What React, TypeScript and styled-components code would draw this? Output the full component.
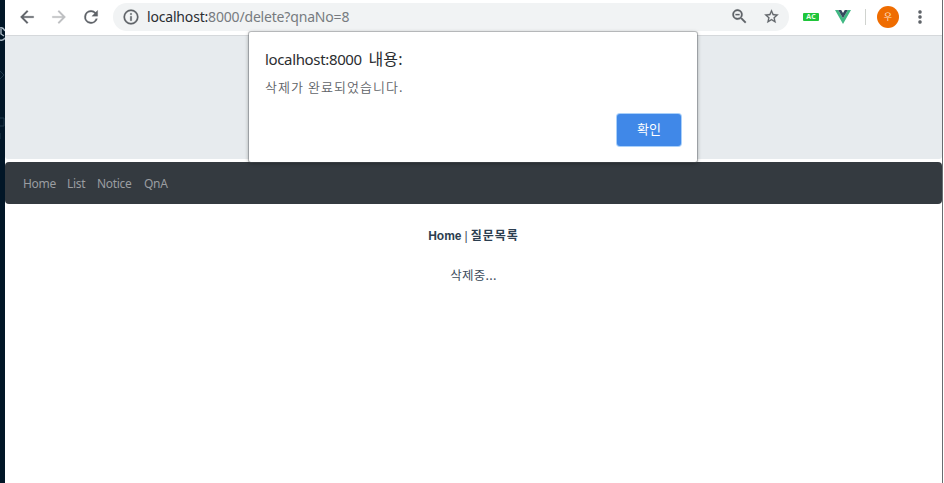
import React from 'react';
import styled, { createGlobalStyle } from 'styled-components';

const GlobalStyle = createGlobalStyle`
  * { box-sizing: border-box; }
  body { margin: 0; overflow: hidden; background: #fff; }
`;

const Desktop = styled.div`
  display: flex;
  position: relative;
  width: 944px;
  height: 483px;
  background: #fff;
  font-family: "Noto Sans", "Noto Sans CJK KR", sans-serif;
`;

const EditorEdge = styled.div`
  width: 5px;
  flex: none;
  background: #011627;
  svg { display: block; }
`;

const BrowserWindow = styled.div`
  display: flex;
  flex-direction: column;
  flex: 1;
  min-width: 0;
  border-right: 1px solid #686c70;
  margin-right: 1px;
`;

const Toolbar = styled.header`
  display: flex;
  align-items: center;
  height: 36px;
  flex: none;
  padding: 0 0 2px 12px;
  border-bottom: 1px solid #d5d8db;
`;

const ToolButton = styled.button<{ $gap?: number; $color?: string }>`
  display: flex;
  padding: 0;
  border: 0;
  background: none;
  flex: none;
  margin-right: ${p => p.$gap ?? 0}px;
  color: ${p => p.$color ?? '#5f6368'};
`;

const AddressBar = styled.div`
  display: flex;
  align-items: center;
  width: 676px;
  height: 28px;
  border-radius: 14px;
  padding: 0 9px;
  background: #f1f3f4;
`;

const Url = styled.div`
  flex: 1;
  margin-left: 7px;
  font-size: 14px;
  line-height: 20px;
  letter-spacing: -0.18px;
  color: #777b80;
  white-space: nowrap;
`;

const Host = styled.span`
  color: #2a2d31;
`;

const Extension = styled.div<{ $gap: number }>`
  display: flex;
  flex: none;
  margin-left: ${p => p.$gap}px;
`;

const AcBadge = styled.span`
  width: 16px;
  height: 8px;
  border-radius: 1px;
  background: #1fc53a;
  color: #e9ffe9;
  font: bold 7px/8px "Open Sans", sans-serif;
  text-align: center;
`;

const Divider = styled.span`
  width: 1px;
  height: 16px;
  margin: 0 11px 0 14px;
  background: #d0d3cf;
`;

const Avatar = styled.span`
  width: 22px;
  height: 22px;
  border-radius: 50%;
  margin-right: 11px;
  background: #ef6c00;
  color: #ffe0c4;
  font: 9px/21px "Noto Sans CJK KR", sans-serif;
  text-align: center;
`;

const Banner = styled.div`
  height: 123px;
  flex: none;
  margin-bottom: 3px;
  background: #e7ebee;
  border-radius: 0 0 3px 3px;
`;

const Navbar = styled.nav`
  display: flex;
  gap: 12px;
  height: 42px;
  flex: none;
  padding: 0 18px;
  border-radius: 4px;
  background: #343a40;
`;

const NavLink = styled.a<{ $width: number }>`
  width: ${p => p.$width}px;
  font-size: 12px;
  line-height: 43px;
  letter-spacing: -0.3px;
  white-space: nowrap;
  color: #9a9da0;
`;

const Main = styled.main`
  display: flex;
  flex-direction: column;
  align-items: center;
  padding-top: 22px;
  color: #3d4d5d;
  font-size: 12px;
  line-height: 20px;
`;

const Links = styled.div`
  display: flex;
  gap: 3px;
  margin-bottom: 19px;
  font-family: "Liberation Sans", "Noto Sans CJK KR", sans-serif;
`;

const PageLink = styled.a<{ $spacing?: number }>`
  font-weight: bold;
  letter-spacing: ${p => p.$spacing ?? 0}px;
  color: #2c3e50;
`;

const Status = styled.div`
  font-family: "Noto Sans CJK KR", sans-serif;
  font-size: 12.5px;
  letter-spacing: 0.3px;
`;

const Dialog = styled.section`
  position: absolute;
  left: 249px;
  top: 32px;
  width: 448px;
  height: 130px;
  display: flex;
  flex-direction: column;
  padding: 15px 16px 16px;
  background: #fff;
  border-radius: 2px;
  box-shadow: 0 0 0 1px rgba(90, 95, 100, 0.35), 0 1px 4px rgba(0, 0, 0, 0.4);
`;

const DialogTitle = styled.h1`
  margin: 0;
  font-size: 15px;
  font-weight: 400;
  line-height: 24px;
  letter-spacing: -0.35px;
  color: #2b2d30;
`;

const TitleSuffix = styled.span`
  margin-left: 3px;
  font-size: 16px;
  letter-spacing: 0.2px;
`;

const Message = styled.p`
  margin: 6px 0 0;
  font: 350 13px/20px "Noto Sans CJK KR", sans-serif;
  letter-spacing: 1.05px;
  color: #606368;
`;

const ConfirmButton = styled.button`
  align-self: flex-end;
  width: 64px;
  height: 32px;
  margin-top: auto;
  padding: 0 0 3px;
  border: 0;
  border-radius: 3px;
  background: #4088e8;
  box-shadow: 0 0 0 1px #a9d0fa;
  color: #fff;
  font: 13px/20px "Noto Sans CJK KR", sans-serif;
`;

const Icon = ({ d, size = 20 }: { d: string; size?: number }) => (
  <svg width={size} height={size} viewBox="0 0 24 24" fill="currentColor" stroke="currentColor" strokeWidth="0.3">
    <path d={d} />
  </svg>
);

const icons = {
  back: 'M20 11H7.83l5.59-5.59L12 4l-8 8 8 8 1.41-1.41L7.83 13H20v-2z',
  forward: 'M12 4l-1.41 1.41L16.17 11H4v2h12.17l-5.58 5.59L12 20l8-8z',
  reload: 'M17.65 6.35A7.96 7.96 0 0 0 12 4a8 8 0 1 0 7.73 10h-2.08A6 6 0 1 1 12 6c1.66 0 3.14.69 4.22 1.78L13 11h7V4l-2.35 2.35z',
  info: 'M11 17h2v-6h-2v6zm1-15a10 10 0 1 0 0 20 10 10 0 0 0 0-20zm0 18a8 8 0 1 1 0-16 8 8 0 0 1 0 16zM11 9h2V7h-2v2z',
  zoomOut: 'M15.5 14h-.79l-.28-.27A6.5 6.5 0 1 0 13.73 14.43l.27.28v.79l5 4.99L20.49 19l-4.99-5zm-6 0a4.5 4.5 0 1 1 0-9 4.5 4.5 0 0 1 0 9zM7 8.7h5v1.6H7z',
  star: 'M22 9.24l-7.19-.62L12 2 9.19 8.63 2 9.24l5.46 4.73L5.82 21 12 17.27 18.18 21l-1.63-7.03L22 9.24zM12 15.4l-3.76 2.27 1-4.28-3.32-2.88 4.38-.38L12 6.1l1.71 4.04 4.38.38-3.32 2.88 1 4.28L12 15.4z',
  menu: 'M12 8a2 2 0 1 0 0-4 2 2 0 0 0 0 4zm0 2a2 2 0 1 0 0 4 2 2 0 0 0 0-4zm0 6a2 2 0 1 0 0 4 2 2 0 0 0 0-4z',
};

const navItems = [
  { label: 'Home', width: 32 },
  { label: 'List', width: 18 },
  { label: 'Notice', width: 35 },
  { label: 'QnA', width: 24 },
];

export default function App() {
  return (
    <Desktop>
      <GlobalStyle />
      <EditorEdge>
        <svg width="5" height="150" viewBox="0 0 5 150" fill="none">
          <path d="M0 28Q3 27 5 31M0 40Q3 41 5 38M1 29v5l3 2" stroke="#a9b8c4" strokeWidth="1.4" />
          <path d="M0 71l4 4-4 4M0 118h4v8H0M0 133v6" stroke="#20384a" />
        </svg>
      </EditorEdge>
      <BrowserWindow>
        <Toolbar>
          <ToolButton $gap={12}><Icon d={icons.back} size={20} /></ToolButton>
          <ToolButton $gap={12} $color="#bdbfc1"><Icon d={icons.forward} size={20} /></ToolButton>
          <ToolButton $gap={12}><Icon d={icons.reload} size={20} /></ToolButton>
          <AddressBar>
            <ToolButton><Icon d={icons.info} size={18} /></ToolButton>
            <Url><Host>localhost:</Host>8000/delete?qnaNo=8</Url>
            <ToolButton $gap={14}><Icon d={icons.zoomOut} size={19} /></ToolButton>
            <ToolButton><Icon d={icons.star} size={17} /></ToolButton>
          </AddressBar>
          <Extension $gap={14}><AcBadge>AC</AcBadge></Extension>
          <Extension $gap={16}>
            <svg width="16" height="14" viewBox="0 0 16 14">
              <path d="M0 0h3.2L8 8.3 12.8 0H16L8 14z" fill="#41b883" />
              <path d="M3.2 0h3L8 3.1 9.8 0h3L8 8.3z" fill="#35495e" />
            </svg>
          </Extension>
          <Divider />
          <Avatar>우</Avatar>
          <ToolButton><Icon d={icons.menu} size={20} /></ToolButton>
        </Toolbar>
        <Banner />
        <Navbar>
          {navItems.map(item => (
            <NavLink key={item.label} $width={item.width}>{item.label}</NavLink>
          ))}
        </Navbar>
        <Main>
          <Links><PageLink>Home</PageLink><span>|</span><PageLink $spacing={1}>질문목록</PageLink></Links>
          <Status>삭제중...</Status>
        </Main>
      </BrowserWindow>
      <Dialog>
        <DialogTitle>localhost:8000 <TitleSuffix>내용:</TitleSuffix></DialogTitle>
        <Message>삭제가 완료되었습니다.</Message>
        <ConfirmButton>확인</ConfirmButton>
      </Dialog>
    </Desktop>
  );
}
